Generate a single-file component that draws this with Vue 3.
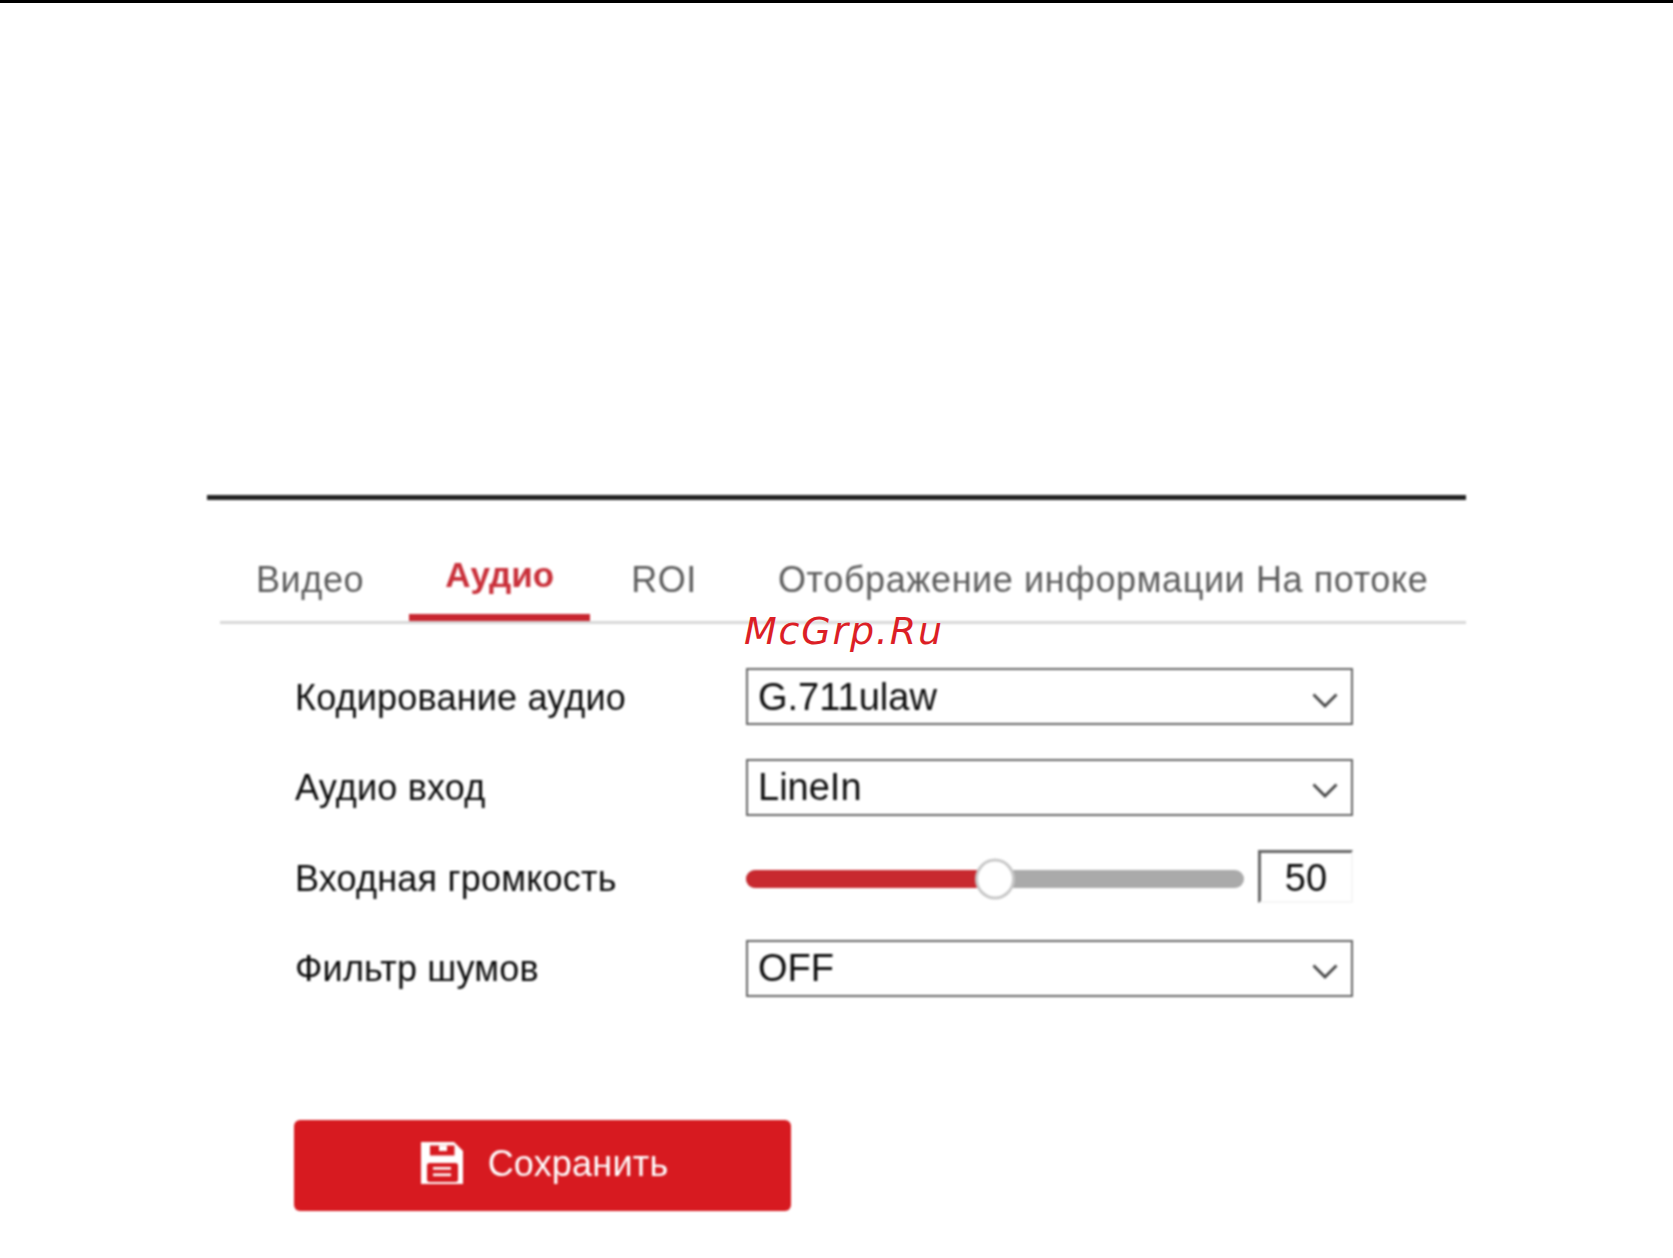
<script setup>
const tabs = [
  { label: 'Видео' },
  { label: 'Аудио', active: true },
  { label: 'ROI' },
  { label: 'Отображение информации На потоке' },
];

const volume = 50;
</script>

<template>
  <div class="page">
    <div class="top-bar"></div>
    <div class="panel">
      <div class="soft">
        <div class="tabs">
          <div v-for="tab in tabs" :key="tab.label" class="tab" :class="{ active: tab.active }">
            {{ tab.label }}
          </div>
        </div>

        <div class="form">
          <label>Кодирование аудио</label>
          <div class="select">
            <span>G.711ulaw</span>
            <svg class="chevron" viewBox="0 0 26 15"><path d="M1.5 1.5 13 13 24.5 1.5" /></svg>
          </div>

          <label>Аудио вход</label>
          <div class="select">
            <span>LineIn</span>
            <svg class="chevron" viewBox="0 0 26 15"><path d="M1.5 1.5 13 13 24.5 1.5" /></svg>
          </div>

          <label>Входная громкость</label>
          <div class="slider-row">
            <div class="track">
              <div class="fill" :style="{ width: volume + '%' }"></div>
              <div class="thumb" :style="{ left: volume + '%' }"></div>
            </div>
            <div class="value">{{ volume }}</div>
          </div>

          <label>Фильтр шумов</label>
          <div class="select">
            <span>OFF</span>
            <svg class="chevron" viewBox="0 0 26 15"><path d="M1.5 1.5 13 13 24.5 1.5" /></svg>
          </div>
        </div>

        <button class="save" type="button">
          <svg class="save-icon" viewBox="0 0 42 42">
            <path fill="#fff" d="M0 0H33L42 9V42H0Z" />
            <path fill="#d71a20" d="M9 3.5H33.5V13.5H9Z" />
            <rect x="18" y="3.5" width="8" height="5.5" fill="#fff" />
            <rect x="6" y="21" width="31" height="19" rx="2.5" fill="#d71a20" />
            <rect x="12" y="25" width="18" height="2.6" fill="#fff" />
            <rect x="12" y="31.5" width="18" height="2.6" fill="#fff" />
          </svg>
          <span class="save-text">Сохранить</span>
        </button>
      </div>
      <span class="watermark">McGrp.Ru</span>
    </div>
  </div>
</template>

<style scoped>
.page {
  width: 1673px;
  height: 1258px;
  background: #fff;
  font-family: "Liberation Sans", Arial, sans-serif;
  overflow: hidden;
}

.top-bar {
  height: 3px;
  background: #000;
}

.panel {
  position: relative;
  width: 1259px;
  margin: 492px 0 0 207px;
}

.soft {
  border-top: 5px solid #222;
  filter: blur(0.8px);
}

.tabs {
  display: flex;
  align-items: flex-end;
  gap: 9px;
  height: 124px;
  margin-left: 13px;
  border-bottom: 3px solid #d8d8d8;
  box-sizing: border-box;
}

.tab {
  padding: 0 36px 20px;
  font-size: 36px;
  line-height: 42px;
  letter-spacing: 0.6px;
  color: #5c5c5c;
  white-space: nowrap;
}

.tab.active {
  margin-right: -4px;
  padding-bottom: 18px;
  border-bottom: 7px solid #c8252f;
  font-size: 35px;
  font-weight: bold;
  letter-spacing: 0;
  color: #c9303a;
}

.watermark {
  position: absolute;
  left: 537px;
  top: 113px;
  font-family: "DejaVu Sans", sans-serif;
  font-size: 38px;
  font-style: italic;
  line-height: 46px;
  letter-spacing: 1.8px;
  color: #dc1f26;
}

.form {
  display: grid;
  grid-template-columns: 451px 607px;
  grid-auto-rows: 57px;
  row-gap: 33.5px;
  align-items: center;
  margin: 44px 0 0 88px;
}

label {
  padding-top: 2px;
  font-size: 36px;
  letter-spacing: 0.2px;
  color: #0c0c0c;
  white-space: nowrap;
}

.select {
  display: flex;
  align-items: center;
  justify-content: space-between;
  height: 57px;
  padding: 1px 13px 0 10px;
  border: 2.5px solid #666;
  box-sizing: border-box;
  font-size: 38px;
  color: #0c0c0c;
}

.chevron {
  width: 26px;
  height: 15px;
  margin-top: 6px;
  fill: none;
  stroke: #444;
  stroke-width: 2.8;
}

.slider-row {
  display: flex;
  align-items: center;
  justify-content: space-between;
}

.track {
  position: relative;
  width: 498px;
  height: 18px;
  margin-top: 3px;
  border-radius: 9px;
  background: #aaa;
}

.fill {
  height: 100%;
  border-radius: 9px 0 0 9px;
  background: #c8292f;
}

.thumb {
  position: absolute;
  top: 50%;
  width: 40px;
  height: 41px;
  border: 3px solid #c8c8c8;
  border-radius: 50%;
  background: #fff;
  box-sizing: border-box;
  transform: translate(-50%, -50%);
}

.value {
  width: 95px;
  height: 53px;
  margin-top: -2px;
  border-top: 3px solid #666;
  border-left: 3px solid #666;
  border-right: 2px solid #f6f6f6;
  border-bottom: 2px solid #f6f6f6;
  box-sizing: border-box;
  font-size: 38px;
  line-height: 50px;
  text-align: center;
  color: #0c0c0c;
}

.save {
  display: flex;
  align-items: center;
  justify-content: center;
  gap: 25px;
  width: 497px;
  height: 91px;
  margin: 123px 0 0 87px;
  padding: 0 0 0 4px;
  border: none;
  border-radius: 6px;
  background: #d71a20;
  font-family: inherit;
  font-size: 36px;
  color: #fff;
}

.save-icon {
  width: 42px;
  height: 42px;
  margin-bottom: 4px;
}

.save-text {
  margin-bottom: 2px;
  letter-spacing: 0.2px;
}
</style>

<style>
html, body {
  background: #fff;
}
</style>
